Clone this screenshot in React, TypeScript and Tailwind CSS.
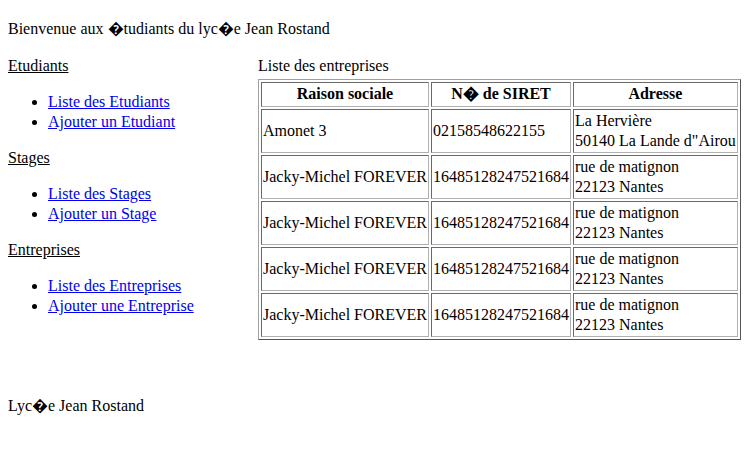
const ROWS = [
  { name: 'Amonet 3', siret: '02158548622155', street: 'La Hervière', city: '50140 La Lande d"Airou' },
  { name: 'Jacky-Michel FOREVER', siret: '16485128247521684', street: 'rue de matignon', city: '22123 Nantes' },
  { name: 'Jacky-Michel FOREVER', siret: '16485128247521684', street: 'rue de matignon', city: '22123 Nantes' },
  { name: 'Jacky-Michel FOREVER', siret: '16485128247521684', street: 'rue de matignon', city: '22123 Nantes' },
  { name: 'Jacky-Michel FOREVER', siret: '16485128247521684', street: 'rue de matignon', city: '22123 Nantes' },
];

const MENU = [
  { title: 'Etudiants', links: ['Liste des Etudiants', 'Ajouter un Etudiant'] },
  { title: 'Stages', links: ['Liste des Stages', 'Ajouter un Stage'] },
  { title: 'Entreprises', links: ['Liste des Entreprises', 'Ajouter une Entreprise'] },
];

const cell =
  'border border-solid border-t-[#696969] border-l-[#696969] border-r-[#b0b0b0] border-b-[#b0b0b0] p-px';

const App = (): JSX.Element => {
  return (
    <div className="min-h-[450px] bg-white px-2 font-['Liberation_Serif',serif] text-[16px] leading-[20px] text-black">
      <p className="pt-[19px]">Bienvenue aux {'\uFFFD'}tudiants du lyc{'\uFFFD'}e Jean Rostand</p>

      <div className="mt-[17px] flex">
        <nav className="w-[250px] shrink-0">
          {MENU.map((section, i) => (
            <div key={section.title}>
              <p className="underline">{section.title}</p>
              <ul className={i === MENU.length - 1 ? 'mt-4 list-disc pl-10' : 'my-4 list-disc pl-10'}>
                {section.links.map((link) => (
                  <li key={link}>
                    <a href="#" className="text-[#0000ee] underline">
                      {link}
                    </a>
                  </li>
                ))}
              </ul>
            </div>
          ))}
        </nav>

        <div>
          <p>Liste des entreprises</p>
          <table className="mt-[3px] table-fixed border-separate border-spacing-[2px] border border-solid border-t-[#a0a0a0] border-l-[#a0a0a0] border-r-[#555555] border-b-[#555555]">
            <thead>
              <tr>
                <th className={`${cell} w-[168px] pb-[2px] text-center font-bold`}>Raison sociale</th>
                <th className={`${cell} w-[140px] pb-[2px] text-center font-bold`}>N{'\uFFFD'} de SIRET</th>
                <th className={`${cell} w-[164px] pb-[2px] text-center font-bold`}>Adresse</th>
              </tr>
            </thead>
            <tbody>
              {ROWS.map((row, i) => (
                <tr key={i}>
                  <td className={`${cell} whitespace-nowrap`}>{row.name}</td>
                  <td className={`${cell} whitespace-nowrap`}>{row.siret}</td>
                  <td className={`${cell} whitespace-nowrap`}>
                    {row.street}
                    <br />
                    {row.city}
                  </td>
                </tr>
              ))}
            </tbody>
          </table>
        </div>
      </div>

      <p className="mt-[56px]">Lyc{'\uFFFD'}e Jean Rostand</p>
    </div>
  );
};

export default App;
